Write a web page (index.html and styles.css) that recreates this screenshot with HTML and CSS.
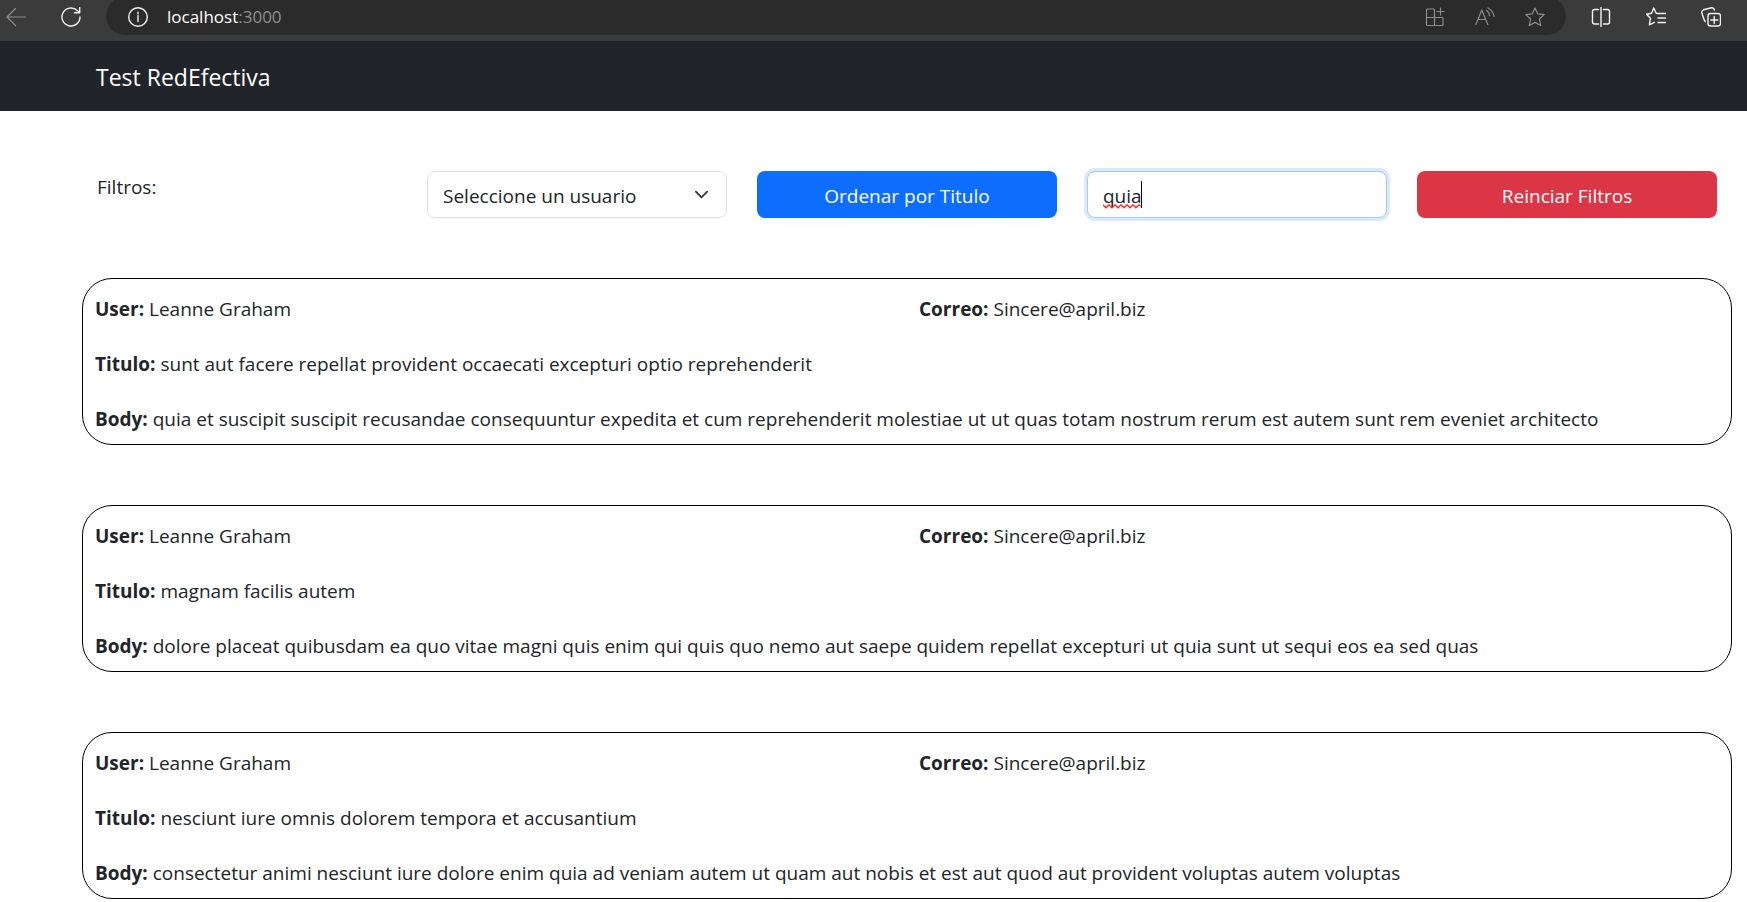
FILE: index.html
```html
<!DOCTYPE html>
<html lang="es">
<head>
<meta charset="utf-8">
<meta name="viewport" content="width=device-width, initial-scale=1">
<title>Test RedEfectiva</title>
<link rel="stylesheet" href="styles.css">
</head>
<body>
<div class="browser">
  <div class="browser-nav">
    <button class="icon-btn dim" type="button" aria-label="Back"><svg viewBox="0 0 20 20"><path d="M19.500 10H1M9.500 1.500L1 10l8.500 8.500"/></svg></button>
    <button class="icon-btn" type="button" aria-label="Refresh"><svg class="bold" viewBox="0 0 20 20"><path d="M19 10a9 9 0 1 1-2.800-6.500L18.500 5.500M18.700.5v5.200h-5.200"/></svg></button>
  </div>
  <div class="address">
    <button class="icon-btn" type="button" aria-label="Site information"><svg class="bold" viewBox="0 0 20 20"><circle cx="10" cy="10" r="9.300"/><path d="M10 8.500v6M10 5.200v1.500"/></svg></button>
    <span class="url">localhost<span class="port">:3000</span></span>
    <div class="address-tools">
      <button class="icon-btn dim" type="button" aria-label="Apps"><svg viewBox="0 0 20 20"><path d="M9.500 10.500V3a1 1 0 0 0-1-1H2.500a1 1 0 0 0-1 1v14.500a1 1 0 0 0 1 1H17a1 1 0 0 0 1-1v-6a1 1 0 0 0-1-1H1.500M9.500 10.500v8M15.500 1v7M12 4.500h7"/></svg></button>
      <button class="icon-btn dim" type="button" aria-label="Read aloud"><svg viewBox="0 0 20 20"><path d="M.8 17.500L6.800 3l6 14.500M3 12.500h7.800M11.500 3.500c2 1.200 3 3 3.200 5.500M13 1c3.500 1.800 5.500 4.500 6 8.500"/></svg></button>
      <button class="icon-btn dim" type="button" aria-label="Add to favorites"><svg viewBox="0 0 20 20"><path d="M10 1l2.700 5.800 6.500.8-4.800 4.400 1.300 6.500L10 15.400l-5.700 3.100 1.300-6.500L.8 7.600l6.500-.8z"/></svg></button>
    </div>
  </div>
  <div class="browser-tools">
    <button class="icon-btn" type="button" aria-label="Split screen"><svg class="bold" viewBox="0 0 20 20"><path d="M7.500 2.500h-4a2 2 0 0 0-2 2v10.500a2 2 0 0 0 2 2h4M12.500 2.500h4a2 2 0 0 1 2 2v10.500a2 2 0 0 1-2 2h-4M10 .2v19.600"/></svg></button>
    <button class="icon-btn" type="button" aria-label="Favorites"><svg class="bold" viewBox="0 0 20 20"><path d="M12.800 6.500l-2.600-.3L7.800 1 5.500 6.200.5 7.300l4 4-1.200 6.500 5-2.500M12.800 6.500H20M12 11h8M12 15.500h8M7.800 1l2.400 5.200 2 .3"/></svg></button>
    <button class="icon-btn" type="button" aria-label="Collections"><svg class="bold" viewBox="0 0 20 20"><rect x="7" y="6.500" width="12.500" height="12.500" rx="2.500"/><path d="M13.200 9.500v7M9.800 13h7M4.200 14.500C3 13 1.200 7 .8 5.500.5 4 1.500 3.200 2.500 2.800L10.500.8c1.500-.3 2.500.5 3 2.200"/></svg></button>
  </div>
</div>

<nav class="navbar"><a class="brand" href="#">Test RedEfectiva</a></nav>

<main class="container">
  <form class="filters">
    <span class="filters-label">Filtros:</span>
    <select class="control select" aria-label="Usuario"><option>Seleccione un usuario</option></select>
    <button class="control btn btn-primary" type="button">Ordenar por Titulo</button>
    <div class="search">
      <input class="control input" type="text" value="quia" aria-label="Buscar" spellcheck="false">
      <span class="caret"></span>
      <svg class="squiggle" viewBox="0 0 38 5"><path d="M0 .8l3 3 3-3 3 3 3-3 3 3 3-3 3 3 3-3 3 3 3-3 3 3 3-3 1.500 1.500"/></svg>
    </div>
    <button class="control btn btn-danger" type="reset">Reinciar Filtros</button>
  </form>

  <section class="posts">
    <article class="card">
      <div class="card-head"><p><b>User:</b> Leanne Graham</p><p><b>Correo:</b> Sincere@april.biz</p></div>
      <p><b>Titulo:</b> sunt aut facere repellat provident occaecati excepturi optio reprehenderit</p>
      <p><b>Body:</b> quia et suscipit suscipit recusandae consequuntur expedita et cum reprehenderit molestiae ut ut quas totam nostrum rerum est autem sunt rem eveniet architecto</p>
    </article>
    <article class="card">
      <div class="card-head"><p><b>User:</b> Leanne Graham</p><p><b>Correo:</b> Sincere@april.biz</p></div>
      <p><b>Titulo:</b> magnam facilis autem</p>
      <p><b>Body:</b> dolore placeat quibusdam ea quo vitae magni quis enim qui quis quo nemo aut saepe quidem repellat excepturi ut quia sunt ut sequi eos ea sed quas</p>
    </article>
    <article class="card">
      <div class="card-head"><p><b>User:</b> Leanne Graham</p><p><b>Correo:</b> Sincere@april.biz</p></div>
      <p><b>Titulo:</b> nesciunt iure omnis dolorem tempora et accusantium</p>
      <p><b>Body:</b> consectetur animi nesciunt iure dolore enim quia ad veniam autem ut quam aut nobis et est aut quod aut provident voluptas autem voluptas</p>
    </article>
  </section>
</main>
</body>
</html>
```
FILE: styles.css
```css
* { box-sizing: border-box; }

body {
  margin: 0;
  background: #fff;
  color: #212529;
  font-family: "Segoe UI", "Open Sans", "Noto Sans", sans-serif;
  font-size: 19px;
  line-height: 30px;
}

p { margin: 0; }

/* Browser toolbar */
.browser {
  display: flex;
  align-items: flex-start;
  height: 41px;
  padding: 0 26px 0 6px;
  background: #3b3b3b;
  overflow: hidden;
}

.browser-nav,
.browser-tools,
.address-tools,
.address {
  display: flex;
  align-items: center;
}

.browser-nav,
.browser-tools { height: 33px; gap: 35px; }
.browser-nav { margin-right: 25px; }
.browser-tools { margin-left: 25px; }

.address {
  flex: 1;
  height: 38px;
  margin-top: -3px;
  padding: 1px 21px 0 22px;
  background: #2b2b2b;
  border-radius: 19px;
}

.address-tools { gap: 30px; margin-left: auto; }

.url {
  margin-left: 19px;
  color: #fff;
  font-size: 17px;
}

.port { color: #8f8f8f; }

.icon-btn {
  display: block;
  width: 20px;
  height: 20px;
  padding: 0;
  border: 0;
  background: none;
  color: #f2f2f2;
}

.icon-btn.dim { color: #8c8c8c; }

.icon-btn svg {
  display: block;
  width: 20px;
  height: 20px;
  fill: none;
  stroke: currentColor;
  stroke-width: 1.2;
  stroke-linecap: round;
  stroke-linejoin: round;
}

.icon-btn svg.bold { stroke-width: 1.4; }

/* Page header */
.navbar {
  display: flex;
  align-items: center;
  height: 70px;
  padding: 2px 96px 0;
  background: #212529;
}

.brand {
  color: #fff;
  font-size: 23px;
  text-decoration: none;
}

/* Content */
.container { padding: 60px 15px 0 82px; }

.filters {
  display: grid;
  grid-template-columns: repeat(5, 1fr);
  gap: 30px;
  padding: 0 15px;
}

.filters-label { padding-top: 1px; }

.control {
  display: block;
  width: 100%;
  height: 47px;
  padding: 2px 15px 0;
  border: 1px solid transparent;
  border-radius: 8px;
  color: #212529;
  font: inherit;
}

.select {
  appearance: none;
  border-color: #dee2e6;
  background: #fff url("data:image/svg+xml,%3Csvg xmlns='http://www.w3.org/2000/svg' viewBox='0 0 16 16'%3E%3Cpath fill='none' stroke='%23343a40' stroke-linecap='round' stroke-linejoin='round' stroke-width='2' d='m2 5 6 6 6-6'/%3E%3C/svg%3E") no-repeat right 17px center / 15px 15px;
}

.btn { color: #fff; text-align: center; }
.btn-primary { background: #0d6efd; }
.btn-danger { background: #dc3545; }

.search { position: relative; }

.input {
  border-color: #a6c9fb;
  box-shadow: 0 0 0 3px #dbe8fe;
  outline: none;
}

.caret {
  position: absolute;
  top: 10px;
  left: 54px;
  width: 1px;
  height: 27px;
  background: #000;
}

.squiggle {
  position: absolute;
  top: 33px;
  left: 16px;
  width: 38px;
  height: 5px;
  fill: none;
  stroke: #f22;
  stroke-width: 1.3;
}

.posts {
  display: grid;
  gap: 60px;
  margin-top: 60px;
}

.card {
  display: grid;
  gap: 25px;
  padding: 15px 12px 10px;
  border: 1px solid #000;
  border-radius: 30px;
}

.card-head {
  display: grid;
  grid-template-columns: 1fr 1fr;
  column-gap: 24px;
}
```
